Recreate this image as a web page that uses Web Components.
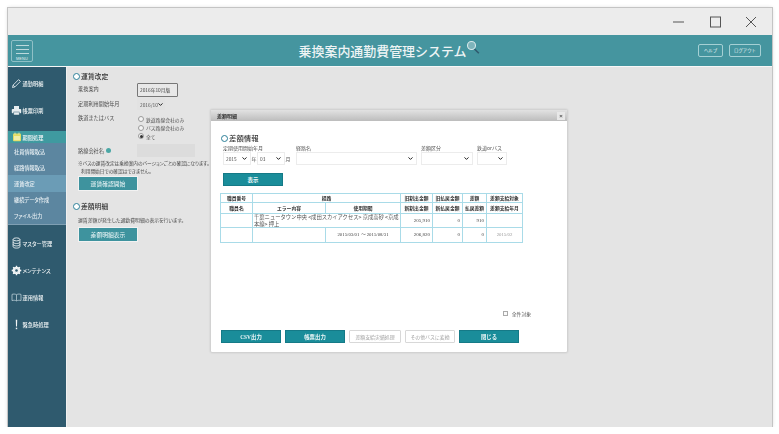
<!DOCTYPE html>
<html lang="ja">
<head>
<meta charset="utf-8">
<title>乗換案内通勤費管理システム</title>
<style>
html, body { margin: 0; background: #fff; }
body { font-family: "Noto Sans CJK JP", "Liberation Sans", sans-serif; color: #444; }
</style>
</head>
<body>

<app-window>
  <window-bar slot="bar"></window-bar>
  <app-header slot="header"></app-header>
  <side-nav slot="nav">
    <nav-item><svg slot="icon" width="11" height="11" viewBox="0 0 11 11" fill="none" stroke="#dfe8ec" stroke-width=".9"><path d="M1.500 9.500l.6-2.400L7.600 1.600l1.800 1.800-5.500 5.500z"/><path d="M2.100 7.100l1.800 1.800"/></svg>通勤明細</nav-item>
    <nav-item><svg slot="icon" width="11" height="11" viewBox="0 0 11 11" fill="#e8eef0"><rect x="3" y="1" width="5" height="3"/><rect x=".8" y="4" width="9.400" height="4.200" rx=".8"/><rect x="2.800" y="7" width="5.400" height="3" stroke="#2f5a6e" stroke-width=".5"/></svg>帳票印刷</nav-item>
    <nav-group>
      <nav-item slot="title" active><svg slot="icon" width="10" height="10" viewBox="0 0 10 10"><rect x="1" y="1.600" width="8" height="7.600" rx="1" fill="#e3dc62"/><rect x="2" y="4" width="6" height="4.200" fill="#f1eea8"/><path d="M3 .6v2M7 .6v2" stroke="#f5f2b0" stroke-width=".8"/></svg>期間処理</nav-item>
      <sub-item>社員情報取込</sub-item>
      <sub-item>経路情報取込</sub-item>
      <sub-item current>運賃改定</sub-item>
      <sub-item>継続データ作成</sub-item>
      <sub-item>ファイル出力</sub-item>
    </nav-group>
    <nav-item><svg slot="icon" width="11" height="12" viewBox="0 0 11 12" fill="none" stroke="#e8eef0" stroke-width=".9"><ellipse cx="5.500" cy="2.400" rx="3.400" ry="1.500"/><path d="M2.100 2.400v7.200c0 .9 1.500 1.500 3.400 1.500s3.400-.6 3.400-1.500V2.400"/><path d="M2.100 5c0 .9 1.500 1.500 3.400 1.500S8.900 5.900 8.900 5M2.100 7.400c0 .9 1.500 1.500 3.400 1.500s3.400-.6 3.400-1.500"/></svg>マスター管理</nav-item>
    <nav-item><svg slot="icon" width="11" height="11" viewBox="0 0 11 11"><circle cx="5.500" cy="5.500" r="2.900" fill="none" stroke="#f0f4f5" stroke-width="1.900"/><path d="M5.500.7v9.600M.7 5.500h9.600M2.100 2.100l6.800 6.800M8.900 2.100l-6.800 6.800" stroke="#f0f4f5" stroke-width="1.300"/><circle cx="5.500" cy="5.500" r="1.300" fill="#2f5a6e"/></svg>メンテナンス</nav-item>
    <nav-item><svg slot="icon" width="11" height="11" viewBox="0 0 11 11" fill="none" stroke="#b9cdd5" stroke-width=".8"><path d="M1 2.400c1.500-.5 3-.5 4.500.3 1.500-.8 3-.8 4.500-.3v6.200c-1.500-.5-3-.5-4.500.3-1.500-.8-3-.8-4.500-.3z"/><path d="M5.500 2.700v6.200"/></svg>運用情報</nav-item>
    <nav-item><svg slot="icon" width="11" height="11" viewBox="0 0 11 11" fill="#f4f6f7"><path d="M4.800.8h1.400l-.2 6.800h-1z"/><rect x="4.800" y="8.700" width="1.400" height="1.500"/></svg>緊急時処理</nav-item>
  </side-nav>
  <fare-panel slot="main"></fare-panel>
  <diff-dialog slot="overlay"></diff-dialog>
</app-window>

<script>
function shell(el, css, html) {
  el.attachShadow({ mode: "open" });
  el.shadowRoot.innerHTML = "<style>" + css + "</style>" + html;
}

class AppWindow extends HTMLElement {
  constructor() {
    super();
    shell(this, `
      :host { display: flex; flex-direction: column; width: 764px; height: 419px; margin: 8px 0 0 8px;
        background: #e4e4e4; box-shadow: 0 0 0 1px #c4c4c4, 0 0 4px rgba(0,0,0,.18); filter: blur(.3px); }
      .body { position: relative; flex: 1; display: flex; min-height: 0; }
      .overlay { position: absolute; left: 202px; top: 42px; }
    `, `
      <slot name="bar"></slot>
      <slot name="header"></slot>
      <div class="body">
        <slot name="nav"></slot>
        <slot name="main"></slot>
        <div class="overlay"><slot name="overlay"></slot></div>
      </div>`);
  }
}

class WindowBar extends HTMLElement {
  constructor() {
    super();
    shell(this, `
      :host { display: flex; justify-content: flex-end; align-items: center; height: 27px; background: #ececec; padding-right: 12px; gap: 19px; }
      svg { display: block; }
    `, `
      <svg width="18" height="14" viewBox="0 0 18 14"><path d="M3 7h11" stroke="#555" stroke-width="1"/></svg>
      <svg width="17" height="14" viewBox="0 0 17 14" fill="none"><rect x="3.500" y="2" width="10" height="10" stroke="#555"/></svg>
      <svg width="17" height="14" viewBox="0 0 17 14" fill="none" stroke="#555"><path d="M3 2l10 10M13 2L3 12"/></svg>`);
  }
}

class AppHeader extends HTMLElement {
  constructor() {
    super();
    shell(this, `
      :host { display: grid; grid-template-columns: 1fr auto 1fr; align-items: center; height: 31px;
        background: #45959f; border-bottom: 1px solid #f7f7f7; color: #fff; }
      .menu { justify-self: start; margin-left: 3px; width: 22px; height: 22px; border: 1px solid #8fc0c6; border-radius: 2px;
        display: flex; flex-direction: column; align-items: center; padding-top: 4px; box-sizing: border-box; }
      .menu i { display: block; width: 13px; height: 1px; background: #bcd9dc; margin-bottom: 3.500px; }
      .menu span { font: 3.800px/4px "Liberation Sans", sans-serif; color: #e4f0f1; letter-spacing: .2px; margin-top: -.5px; }
      h1 { margin: 0 0 0 -3px; display: flex; align-items: flex-start; font-size: 12.950px; font-weight: 500; line-height: 15px; color: #eef4f5; white-space: nowrap; }
      h1 svg { margin: -3px -2px 0 0; }
      .tools { justify-self: end; display: flex; gap: 6px; margin-right: 11px; }
      .tools span { display: block; height: 13px; box-sizing: border-box; line-height: 11px; border: 1px solid #a5d0d4; border-radius: 2px; font-size: 4.400px; text-align: center; color: #e8f3f4; }
      .help { width: 25px; }
      .out { width: 32px; }
    `, `
      <div class="menu"><i></i><i></i><i></i><span>MENU</span></div>
      <h1>乗換案内通勤費管理システム<svg width="14" height="15" viewBox="0 0 14 15" fill="none"><circle cx="5.500" cy="5.500" r="4" stroke="#d7e8ea" stroke-width="1.100" fill="#7eb4bb"/><path d="M8.500 9l4.300 4.300" stroke="#2f5a6e" stroke-width="1.600"/></svg></h1>
      <div class="tools"><span class="help">ヘルプ</span><span class="out">ログアウト</span></div>`);
  }
}

class SideNav extends HTMLElement {
  constructor() {
    super();
    shell(this, `
      :host { display: block; flex: none; width: 58px; padding-top: 3px; background: #2f5a6e; border-right: 1px solid #f0f0f0; }
    `, `<slot></slot>`);
  }
}

class NavItem extends HTMLElement {
  constructor() {
    super();
    shell(this, `
      :host { display: flex; align-items: center; height: 27px; padding-left: 3px; font-size: 5.200px; font-weight: 500; color: #f0f4f5; white-space: nowrap; font-feature-settings: "palt"; }
      :host([active]) { height: 12px; background: #3f9aa0; }
      .icon { display: flex; justify-content: center; width: 11px; margin-right: .5px; }
      .text { letter-spacing: .05px; }
    `, `<span class="icon"><slot name="icon"></slot></span><span class="text"><slot></slot></span>`);
  }
}

class NavGroup extends HTMLElement {
  constructor() {
    super();
    shell(this, `
      :host { display: block; margin: 7px 0 5px; }
      .subs { background: #5c86a0; border-bottom: 1px solid #7f9fb3; }
    `, `<slot name="title"></slot><div class="subs"><slot></slot></div>`);
  }
}

class SubItem extends HTMLElement {
  constructor() {
    super();
    shell(this, `
      :host { display: flex; align-items: center; height: 16.200px; padding-left: 6px; font-size: 5.200px; font-weight: 500; color: #e6eef2; white-space: nowrap; font-feature-settings: "palt"; }
      :host([current]) { background: #6b9cb6; }
    `, `<slot></slot>`);
  }
}

class RingTitle extends HTMLElement {
  constructor() {
    super();
    shell(this, `
      :host { display: flex; align-items: center; gap: 1px; color: #333; line-height: 10px; font-size: var(--ring-size, 6.800px); font-weight: 500; }
      i { width: 5px; height: 5px; border: 1.200px solid #2b7f98; border-radius: 50%; background: #fff; flex: none; }
    `, `<i></i><slot></slot>`);
  }
}

class TealButton extends HTMLElement {
  constructor() {
    super();
    shell(this, `
      :host { display: flex; align-items: center; justify-content: center; box-sizing: border-box; width: var(--btn-w, 60px); height: var(--btn-h, 13px);
        background: var(--btn-bg, #1a8d9a); color: #eef7f8; font-size: var(--btn-size, 5.400px); font-weight: var(--btn-weight, 700);
        border: 1px solid var(--btn-edge, #157a87); white-space: nowrap; font-family: var(--btn-font, inherit); }
      :host([off]) { background: #fff; color: #a2a2a2; border: 1px solid #d8d8d8; border-radius: 1px; font-weight: 400; font-size: 4.900px; }
    `, `<slot></slot>`);
  }
}

class PickBox extends HTMLElement {
  constructor() {
    super();
    shell(this, `
      :host { display: flex; align-items: center; box-sizing: border-box; justify-content: space-between; height: 13px; padding: 0 3px 0 2px;
        background: #fff; border: 1px solid #ececec; font-size: 4.800px; color: #555; }
      svg { flex: none; }
    `, `<span><slot></slot></span><svg width="5" height="3" viewBox="0 0 5 3" fill="none" stroke="#222" stroke-width="1"><path d="M.5.400l2 2 2-2"/></svg>`);
  }
}

class RadioLine extends HTMLElement {
  constructor() {
    super();
    shell(this, `
      :host { display: flex; align-items: center; gap: 2px; height: 8.500px; font-size: 4.800px; color: #555; }
      i { box-sizing: border-box; width: 6px; height: 6px; margin-left: 1px; border: .6px solid #999; border-radius: 50%; background: #f4f4f4; display: flex; align-items: center; justify-content: center; }
      b { width: 3px; height: 3px; border-radius: 50%; background: #333; display: none; }
      :host([on]) b { display: block; }
    `, `<i><b></b></i><slot></slot>`);
  }
}

class FarePanel extends HTMLElement {
  constructor() {
    super();
    shell(this, `
      :host { display: block; flex: 1; padding: 4px 0 0 6px; font-size: 5.200px; color: #4a4a4a; }
      .rows { display: grid; grid-template-columns: 59px 58px; margin-left: 5px; align-items: center; white-space: nowrap; }
      .rows > span { line-height: 6px; }
      .ver { box-sizing: border-box; width: 41px; height: 14px; margin-top: 2px; border: 1px solid #777; border-radius: 1px; background: #e8e8e8; font-size: 4.800px; line-height: 12px; padding-left: 2px; color: #444; }
      .month { width: 28px; height: 12px; background: #e2e2e2; border-color: #e2e2e2; margin-top: 1px; }
      .radios { padding-top: 5px; height: 28px; }
      .company { margin-top: 1px; }
      .blank { height: 13px; background: #dcdcdc; }
      .note { margin: 2px 0 0 5px; font-size: 4.700px; line-height: 8px; white-space: nowrap; color: #444; font-feature-settings: "palt"; }
      .note span { padding-left: 3px; }
      teal-button { margin: 1px 0 0 5px; --btn-w: 60px; --btn-h: 15px; --btn-bg: #3e939e; --btn-edge: #f2f2f2; --btn-weight: 400; --btn-size: 5.800px; }
      .second { margin-top: 10px; }
      .desc { margin: 5px 0 0 5px; font-size: 4.850px; line-height: 8px; white-space: nowrap; font-feature-settings: "palt"; }
      .go { margin-top: 3px; }
      .q { display: inline-block; width: 5px; height: 5px; border-radius: 50%; background: #4aa7a5; margin-left: 2px; }
      .label3 { align-self: start; padding-top: 5px; }
    `, `
      <ring-title>運賃改定</ring-title>
      <div class="rows">
        <span>乗換案内</span><div class="ver">2016年10月版</div>
        <span>定期利用開始年月</span><pick-box class="month">2016/10</pick-box>
        <span class="label3">鉄道またはバス</span>
        <div class="radios">
          <radio-line>鉄道路線会社のみ</radio-line>
          <radio-line>バス路線会社のみ</radio-line>
          <radio-line on>全て</radio-line>
        </div>
        <span class="company">路線会社名<i class="q"></i></span><div class="company blank"></div>
      </div>
      <div class="note">※バスの運賃改定は乗換案内のバージョンごとの確認になります。<br><span>利用開始日での確認はできません。</span></div>
      <teal-button>運賃確認開始</teal-button>
      <ring-title class="second">差額明細</ring-title>
      <div class="desc">運賃差額が発生した通勤費明細の表示を行います。</div>
      <teal-button class="go">差額明細表示</teal-button>`);
  }
}

class DiffTable extends HTMLElement {
  constructor() {
    super();
    shell(this, `
      :host { display: block; font-size: 4.800px; color: #444; }
      table { border-collapse: collapse; table-layout: fixed; width: 302px; }
      td, th { border: 1px solid #a9dbe8; padding: 0 1px; line-height: 6px; overflow: hidden; white-space: nowrap; }
      th { font-weight: 700; font-size: 4.800px; color: #333; text-align: center; padding: 0; }
      .n { text-align: right; padding-right: 2px; font-family: "Liberation Serif", serif; font-size: 5px; }
      .c { text-align: center; font-family: "Liberation Serif", serif; font-size: 4.800px; }
      .dim { color: #999; }
      .r1 { height: 9px; } .r2 { height: 11px; } .r3 { height: 14px; } .r4 { height: 15px; }
      .route { vertical-align: top; font-size: 5.300px; line-height: 6.500px; color: #555; }
    `, `
      <table>
        <colgroup><col style="width:32px"><col style="width:73px"><col style="width:75px"><col style="width:32px"><col style="width:30px"><col style="width:24px"><col style="width:36px"></colgroup>
        <tr class="r1"><th>職員番号</th><th colspan="2">経路</th><th>旧割出金額</th><th>旧払戻金額</th><th>差額</th><th>差額支給対象</th></tr>
        <tr class="r2"><th>職員名</th><th>エラー内容</th><th>使用期間</th><th>新割出金額</th><th>新払戻金額</th><th>払戻差額</th><th>差額支給年月</th></tr>
        <tr class="r3"><td></td><td colspan="2" class="route">千葉ニュータウン中央 &lt;成田スカイアクセス&gt; 京成高砂 &lt;京成<br>本線&gt; 押上</td><td class="n">205,910</td><td class="n">0</td><td class="n">910</td><td></td></tr>
        <tr class="r4"><td></td><td></td><td class="c">2015/03/01 〜 2015/08/31</td><td class="n">206,820</td><td class="n">0</td><td class="n">0</td><td class="c dim">2015/02</td></tr>
      </table>`);
  }
}

class DiffDialog extends HTMLElement {
  constructor() {
    super();
    shell(this, `
      :host { display: flex; flex-direction: column; width: 358px; height: 244px; box-sizing: border-box; background: #fff;
        border: 1px solid #d2d2d2; border-radius: 2px; box-shadow: 0 0 2px rgba(0,0,0,.12); color: #444; }
      .title { display: flex; align-items: center; justify-content: space-between; height: 11px; flex: none; padding: 0 2px 0 6px; font-size: 5px; font-weight: 700; color: #333;
        background: linear-gradient(#e2e2e2, #bcbcbc); }
      .x { width: 8px; height: 8px; background: #e8e8e8; color: #555; font: 700 6px/8px "Liberation Sans", sans-serif; text-align: center; }
      .body { flex: 1; display: flex; flex-direction: column; padding: 12px 0 9px 10px; min-height: 0; }
      ring-title { --ring-size: 7.400px; }
      .filters { display: flex; margin: 2px 0 0 2px; font-size: 5px; line-height: 6px; color: #555; white-space: nowrap; }
      .filters label { display: block; height: 7px; }
      .line { display: flex; align-items: center; }
      .line span { width: 6px; text-align: center; }
      .f1 { margin-right: 5px; }
      .f2, .f3 { margin-right: 4px; }
      teal-button.show { margin: 8px 0 0 2px; }
      diff-table { margin: 7px 0 0 -1px; }
      .all { display: flex; align-items: center; gap: 4px; margin: auto 36px 13px 0; justify-content: flex-end; font-size: 4.800px; color: #555; }
      .all i { box-sizing: border-box; width: 5px; height: 5px; border: .6px solid #aaa; background: #fafafa; }
      .foot { display: flex; gap: 4px; --btn-font: "Liberation Serif", "Noto Sans CJK JP", serif; }
      .foot .w52 { --btn-w: 52px; }
      .foot .w50 { --btn-w: 50px; }
    `, `
      <div class="title">差額明細<span class="x">×</span></div>
      <div class="body">
        <ring-title>差額情報</ring-title>
        <div class="filters">
          <div class="f1"><label>定期使用開始年月</label>
            <div class="line"><pick-box style="width:28px">2015</pick-box><span>年</span><pick-box style="width:28px">03</pick-box><span>月</span></div></div>
          <div class="f2"><label>経路名</label><pick-box style="width:121px"></pick-box></div>
          <div class="f3"><label>差額区分</label><pick-box style="width:52px"></pick-box></div>
          <div><label>鉄道orバス</label><pick-box style="width:30px"></pick-box></div>
        </div>
        <teal-button class="show">表示</teal-button>
        <diff-table></diff-table>
        <div class="all"><i></i>全件対象</div>
        <div class="foot">
          <teal-button>CSV出力</teal-button>
          <teal-button>帳票出力</teal-button>
          <teal-button off class="w52">差額支給実績処理</teal-button>
          <teal-button off class="w50">その他バスに変換</teal-button>
          <teal-button>閉じる</teal-button>
        </div>
      </div>`);
  }
}

customElements.define("app-window", AppWindow);
customElements.define("window-bar", WindowBar);
customElements.define("app-header", AppHeader);
customElements.define("side-nav", SideNav);
customElements.define("nav-item", NavItem);
customElements.define("nav-group", NavGroup);
customElements.define("sub-item", SubItem);
customElements.define("ring-title", RingTitle);
customElements.define("teal-button", TealButton);
customElements.define("pick-box", PickBox);
customElements.define("radio-line", RadioLine);
customElements.define("fare-panel", FarePanel);
customElements.define("diff-table", DiffTable);
customElements.define("diff-dialog", DiffDialog);
</script>
</body>
</html>
